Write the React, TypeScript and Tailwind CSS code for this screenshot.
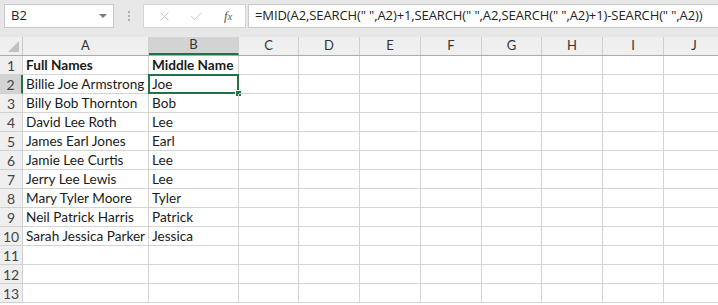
import { X, Check } from 'lucide-react'

const COLS = [
  { key: 'A', w: 'w-[126px]' },
  { key: 'B', w: 'w-[90px]' },
  { key: 'C', w: 'w-[60px]' },
  { key: 'D', w: 'w-[61px]' },
  { key: 'E', w: 'w-[61px]' },
  { key: 'F', w: 'w-[61px]' },
  { key: 'G', w: 'w-[60px]' },
  { key: 'H', w: 'w-[61px]' },
  { key: 'I', w: 'w-[61px]' },
  { key: 'J', w: 'w-[61px]' },
] as const

const ROWS: [string, string][] = [
  ['Full Names', 'Middle Name'],
  ['Billie Joe Armstrong', 'Joe'],
  ['Billy Bob Thornton', 'Bob'],
  ['David Lee Roth', 'Lee'],
  ['James Earl Jones', 'Earl'],
  ['Jamie Lee Curtis', 'Lee'],
  ['Jerry Lee Lewis', 'Lee'],
  ['Mary Tyler Moore', 'Tyler'],
  ['Neil Patrick Harris', 'Patrick'],
  ['Sarah Jessica Parker', 'Jessica'],
  ['', ''],
  ['', ''],
  ['', ''],
]

const FORMULA = '=MID(A2,SEARCH(" ",A2)+1,SEARCH(" ",A2,SEARCH(" ",A2)+1)-SEARCH(" ",A2))'

export default function App() {
  return (
    <div className="w-[718px] h-[305px] overflow-hidden bg-white font-['Lato',sans-serif] text-[#1a1a1a]">
      {/* formula bar */}
      <div className="h-[37px] bg-[#e7e7e7] flex items-start pt-[4px] pl-[4px]">
        <div className="w-[110px] h-[24px] bg-white border border-[#c8c8c8] flex items-center justify-between pl-[6px] pr-[6px]">
          <span className="font-['Open_Sans',sans-serif] text-[13px] text-[#222]">B2</span>
          <span className="w-0 h-0 border-l-[4px] border-r-[4px] border-t-[4px] border-l-transparent border-r-transparent border-t-[#7a7a7a]" />
        </div>
        <div className="w-[29px] h-[24px] flex flex-col items-center justify-center gap-[2px]">
          <span className="w-[2px] h-[2px] bg-[#b0b0b0]" />
          <span className="w-[2px] h-[2px] bg-[#b0b0b0]" />
          <span className="w-[2px] h-[2px] bg-[#b0b0b0]" />
        </div>
        <div className="w-[103px] h-[24px] bg-white border border-[#d4d4d4] flex items-center pl-[13px]">
          <X size={15} strokeWidth={1.2} color="#b8b8b8" />
          <Check size={15} strokeWidth={1.2} color="#b8b8b8" className="ml-[17px]" />
          <span className="ml-[20px] font-['Liberation_Serif',serif] italic text-[13px] text-[#555]">
            f<span className="text-[10px]">x</span>
          </span>
        </div>
        <div className="ml-[2px] flex-1 h-[24px] bg-white border-y border-l border-[#c8c8c8] flex items-center pl-[6px] overflow-hidden whitespace-nowrap">
          <span className="font-['Open_Sans',sans-serif] text-[13px] tracking-[-0.1px] text-[#222]">{FORMULA}</span>
        </div>
      </div>

      {/* column headers */}
      <div className="flex h-[19px] bg-[#efefef] border-b border-[#ababab]">
        <div className="w-[23px] shrink-0 border-r border-[#c8c8c8] flex items-end justify-end pr-[3px] pb-[3px]">
          <svg width="11" height="11" viewBox="0 0 11 11">
            <polygon points="11,0 11,11 0,11" fill="#c2c2c2" />
          </svg>
        </div>
        {COLS.map((c) => (
          <div
            key={c.key}
            className={`${c.w} shrink-0 border-r border-[#d0d0d0] flex items-center justify-center text-[13px] text-[#333] ${
              c.key === 'B' ? 'bg-[#d3d3d3] border-b-2 border-b-[#217346]' : ''
            }`}
          >
            {c.key}
          </div>
        ))}
      </div>

      {/* rows */}
      {ROWS.map(([a, b], i) => {
        const n = i + 1
        const bold = n === 1
        return (
          <div key={n} className="flex h-[19px]">
            <div
              className={`w-[23px] shrink-0 flex items-center justify-center text-[14px] text-[#444] border-b border-[#d0d0d0] ${
                n === 2 ? 'bg-[#d3d3d3] border-r-2 border-r-[#217346]' : 'bg-[#efefef] border-r border-[#ababab]'
              }`}
            >
              {n}
            </div>
            {COLS.map((c) => {
              const text = c.key === 'A' ? a : c.key === 'B' ? b : ''
              const selected = n === 2 && c.key === 'B'
              return (
                <div
                  key={c.key}
                  className={`${c.w} shrink-0 border-r border-b border-[#d4d4d4] flex items-center pl-[3px] pt-[1px] text-[13.6px] whitespace-nowrap relative ${
                    bold ? 'font-bold' : ''
                  }`}
                >
                  {text}
                  {selected && (
                    <>
                      <span className="absolute -left-[1px] -top-[1px] -right-[1px] -bottom-[1px] border-2 border-[#217346]" />
                      <span className="absolute -right-[4px] -bottom-[4px] w-[7px] h-[7px] bg-[#217346] border border-white" />
                    </>
                  )}
                </div>
              )
            })}
          </div>
        )
      })}
    </div>
  )
}
